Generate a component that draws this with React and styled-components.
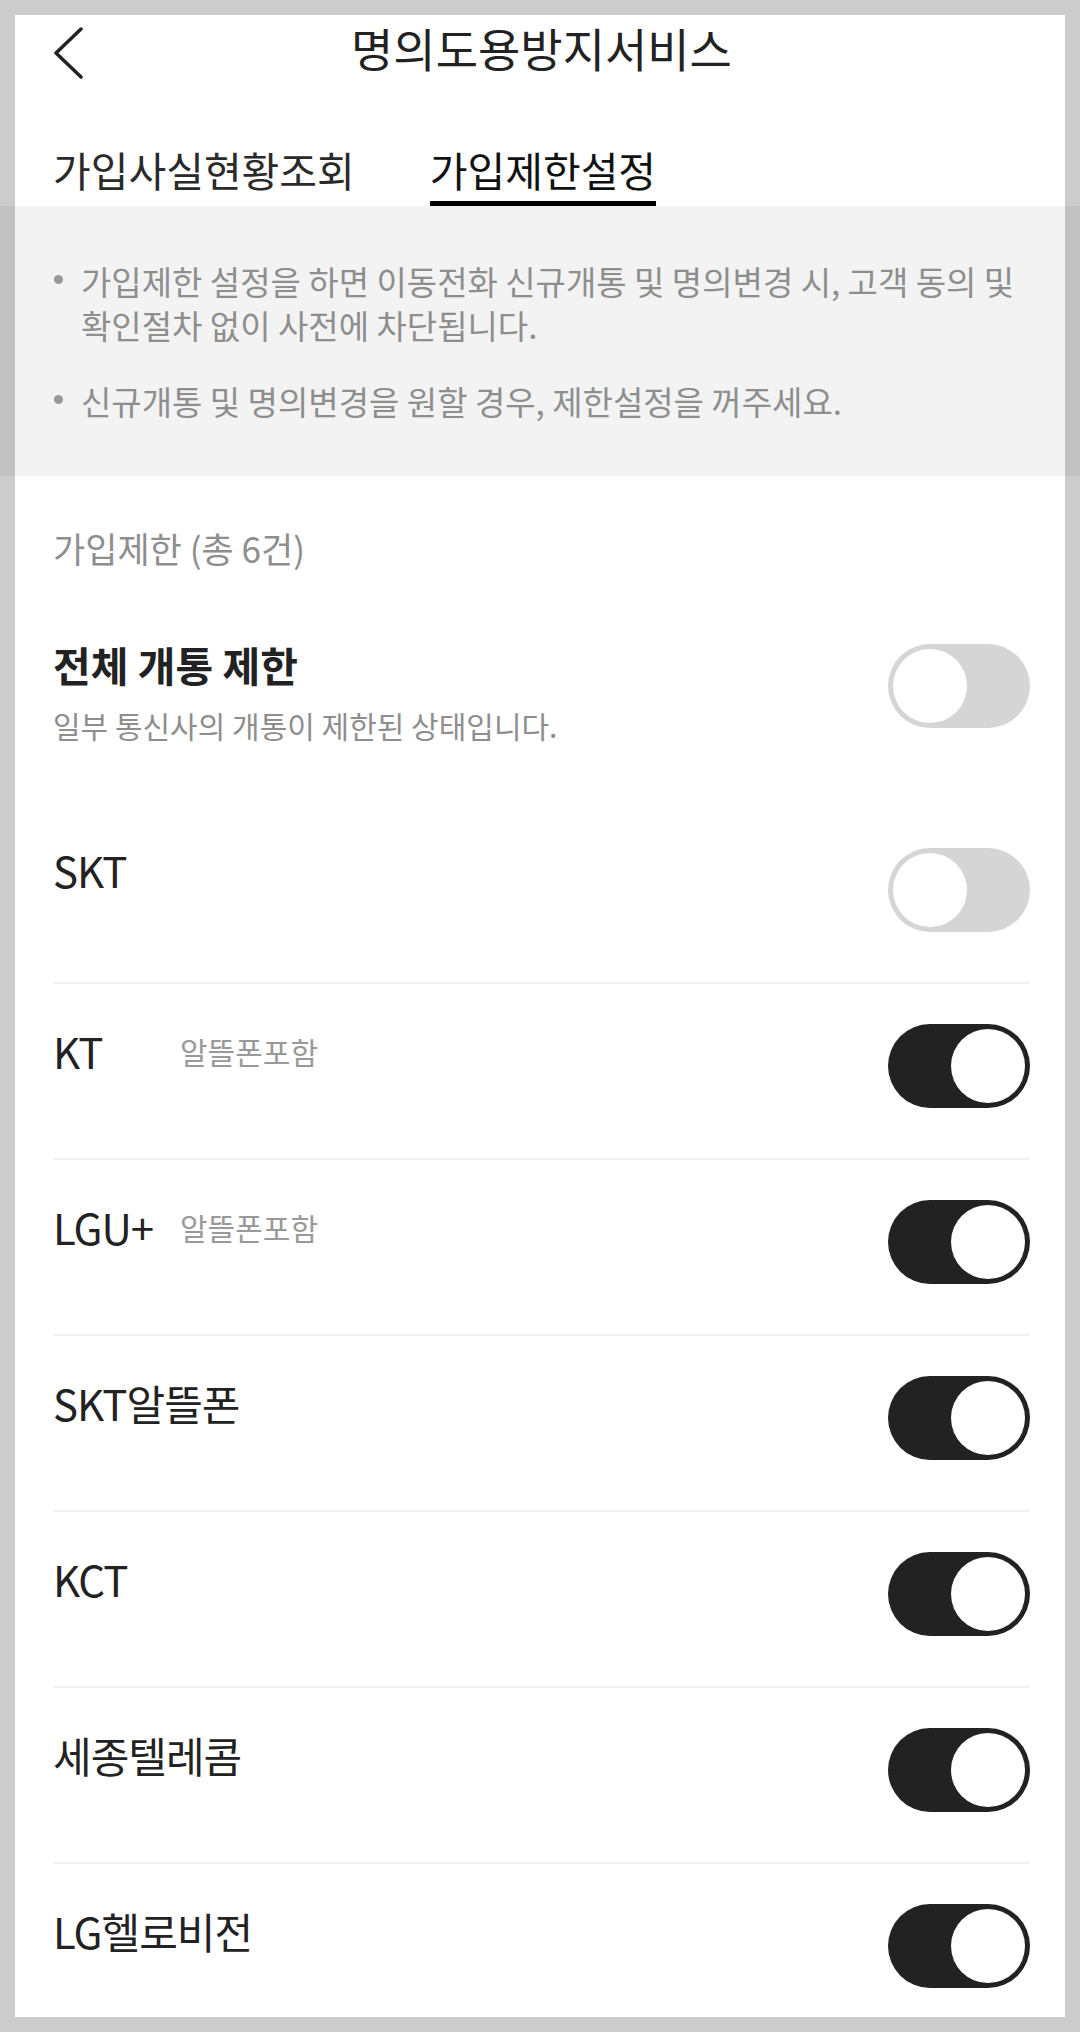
import React from 'react';
import styled, { createGlobalStyle } from 'styled-components';

const palette = {
    ink: '#222222',
    gray: '#8e8e8e',
    lightGray: '#999999',
    notice: '#f3f3f3',
    line: '#f2f2f2',
    off: '#d5d5d5',
    white: '#ffffff',
};

const carriers = [
    { id: 'skt', name: 'SKT', on: false },
    { id: 'kt', name: 'KT', sub: '알뜰폰포함', on: true },
    { id: 'lgu', name: 'LGU+', sub: '알뜰폰포함', on: true },
    { id: 'sktm', name: 'SKT알뜰폰', on: true },
    { id: 'kct', name: 'KCT', on: true },
    { id: 'sejong', name: '세종텔레콤', on: true },
    { id: 'lghv', name: 'LG헬로비전', on: true },
];

const App = () => {
    return (
        <>
            <GlobalStyle />
            <Page>
                <Header>
                    <BackButton aria-label="뒤로">
                        <svg width="30" height="52" viewBox="0 0 30 52" fill="none">
                            <path d="M28 2 L3 26 L28 50" stroke={palette.ink} strokeWidth="3.5" strokeLinecap="round" strokeLinejoin="round" />
                        </svg>
                    </BackButton>
                    <Title>명의도용방지서비스</Title>
                    <span />
                </Header>

                <Tabs>
                    <Tab>가입사실현황조회</Tab>
                    <Tab $active>가입제한설정</Tab>
                </Tabs>

                <Notice>
                    <NoticeItem>가입제한 설정을 하면 이동전화 신규개통 및 명의변경 시, 고객 동의 및 확인절차 없이 사전에 차단됩니다.</NoticeItem>
                    <NoticeItem>신규개통 및 명의변경을 원할 경우, 제한설정을 꺼주세요.</NoticeItem>
                </Notice>

                <ListSection>
                    <SectionLabel>가입제한 (총 6건)</SectionLabel>

                    <MasterRow>
                        <div>
                            <MasterTitle>전체 개통 제한</MasterTitle>
                            <MasterDesc>일부 통신사의 개통이 제한된 상태입니다.</MasterDesc>
                        </div>
                        <Toggle $on={false} $offset={4} aria-label="전체 개통 제한" />
                    </MasterRow>

                    {carriers.map((carrier, index) => (
                        <CarrierRow key={carrier.id} $first={index === 0}>
                            <NameWrap $first={index === 0}>
                                <Name $fixed={!!carrier.sub}>{carrier.name}</Name>
                                {carrier.sub && <SubName>{carrier.sub}</SubName>}
                            </NameWrap>
                            <Toggle $on={carrier.on} aria-label={carrier.name} />
                        </CarrierRow>
                    ))}
                </ListSection>
            </Page>
            <Frame />
        </>
    );
};

const GlobalStyle = createGlobalStyle`
    html, body {
        margin: 0;
        padding: 0;
        background: ${palette.white};
    }
    body {
        font-family: "Noto Sans CJK KR", "Source Han Sans KR", sans-serif;
        color: ${palette.ink};
    }
    button {
        font-family: inherit;
    }
    * {
        box-sizing: border-box;
    }
`;

const Page = styled.div`
    width: 1080px;
    height: 2032px;
    overflow: hidden;
    background: ${palette.white};
`;

const Frame = styled.div`
    position: fixed;
    inset: 0;
    border: 15px solid rgba(0, 0, 0, 0.2);
    pointer-events: none;
`;

const Header = styled.header`
    display: grid;
    grid-template-columns: 1fr auto 1fr;
    align-items: center;
    height: 66px;
    margin-top: 15px;
    padding: 0 50px 0 53px;
`;

const BackButton = styled.button`
    align-self: start;
    justify-self: start;
    margin-top: 12px;
    padding: 0;
    border: none;
    background: none;
    display: flex;
`;

const Title = styled.h1`
    margin: 0;
    font-size: 46px;
    line-height: 1.2;
    font-weight: 400;
    color: ${palette.ink};
`;

const Tabs = styled.nav`
    display: flex;
    gap: 75px;
    margin-top: 64px;
    padding: 0 53px;
`;

const Tab = styled.div`
    font-size: 41px;
    line-height: 48px;
    font-weight: 400;
    color: ${props => props.$active ? '#111' : '#2a2a2a'};
    padding-bottom: 8px;
    border-bottom: 5px solid ${props => props.$active ? '#000' : 'transparent'};
`;

const Notice = styled.ul`
    list-style: none;
    margin: 0;
    padding: 53px 50px 53px 53px;
    background: ${palette.notice};
`;

const NoticeItem = styled.li`
    position: relative;
    padding-left: 28px;
    font-size: 33px;
    line-height: 44px;
    color: ${palette.gray};
    & + & {
        margin-top: 32px;
    }
    &::before {
        content: '';
        position: absolute;
        left: 1px;
        top: 16px;
        width: 9px;
        height: 9px;
        border-radius: 50%;
        background: ${palette.lightGray};
    }
`;

const ListSection = styled.section`
    padding: 0 50px 0 53px;
`;

const SectionLabel = styled.div`
    padding-top: 50px;
    font-size: 35px;
    line-height: 44px;
    color: ${palette.gray};
`;

const MasterRow = styled.div`
    display: flex;
    justify-content: space-between;
    align-items: flex-start;
    margin-top: 70px;
    margin-bottom: 62px;
`;

const MasterTitle = styled.div`
    font-size: 41px;
    line-height: 48px;
    font-weight: 700;
    color: ${palette.ink};
`;

const MasterDesc = styled.div`
    margin-top: 16px;
    font-size: 30px;
    line-height: 42px;
    color: ${palette.gray};
`;

const CarrierRow = styled.div`
    display: flex;
    justify-content: space-between;
    align-items: flex-start;
    padding: 40px 0 50px;
    border-top: ${props => props.$first ? 'none' : `2px solid ${palette.line}`};
`;

const NameWrap = styled.div`
    display: flex;
    align-items: flex-start;
    margin-top: ${props => props.$first ? '-5px' : '0'};
`;

const Name = styled.div`
    min-width: ${props => props.$fixed ? '127px' : '0'};
    font-size: 42px;
    line-height: 54px;
    letter-spacing: -1px;
    color: ${palette.ink};
`;

const SubName = styled.div`
    font-size: 30px;
    line-height: 54px;
    color: ${palette.lightGray};
`;

const Toggle = styled.button`
    position: relative;
    flex-shrink: 0;
    width: 142px;
    height: 84px;
    margin-top: ${props => props.$offset || 0}px;
    padding: 0;
    border: none;
    border-radius: 42px;
    background: ${props => props.$on ? palette.ink : palette.off};
    &::after {
        content: '';
        position: absolute;
        top: 5px;
        left: ${props => props.$on ? '63px' : '5px'};
        width: 74px;
        height: 74px;
        border-radius: 50%;
        background: ${palette.white};
    }
`;

export default App;
